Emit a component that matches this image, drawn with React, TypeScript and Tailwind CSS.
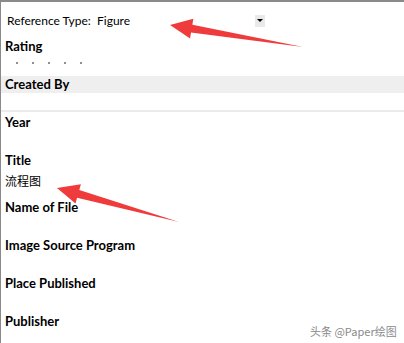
import * as React from "react";

const fields: { label: string; value?: string; tall?: boolean }[] = [
  { label: "Year" },
  { label: "Title", value: "流程图", tall: true },
  { label: "Name of File" },
  { label: "Image Source Program" },
  { label: "Place Published" },
  { label: "Publisher" },
];

function Arrow({ points }: { points: string }) {
  return <polygon points={points} fill="#ef3b3b" />;
}

export default function App() {
  return (
    <div className="relative h-[343px] w-[404px] overflow-hidden border-l border-t-2 border-[#8a8a8a] bg-white font-['Lato',sans-serif] text-[13px] text-black">
      <div className="flex h-[37px] w-[264px] items-center pl-[6px] text-[12px]">
        <span>Reference Type:&nbsp; Figure</span>
        <span className="ml-auto flex h-[12px] w-[10px] items-center justify-center bg-[#e9e9e9]">
          <span className="h-0 w-0 border-x-[3px] border-t-[3px] border-x-transparent border-t-black" />
        </span>
      </div>

      <div className="flex h-[15px] items-center pl-[4px] font-bold">Rating</div>
      <div className="flex h-[22px] gap-[14px] pl-[15px] pt-[8px]">
        {[0, 1, 2, 3, 4].map((i) => (
          <span key={i} className="size-[2px] bg-[#8f8f8f]" />
        ))}
      </div>

      <div className="flex h-[17px] items-center bg-[#efefef] pl-[4px] font-bold">Created By</div>
      <div className="h-[17px]" />
      <div className="h-[2px] bg-[#ebebeb]" />

      <div className="flex flex-col pt-[1px]">
        {fields.map((f) => (
          <div key={f.label} className="flex flex-col">
            <div className="flex h-[19px] items-center pl-[4px] font-bold">{f.label}</div>
            <div className={f.tall ? "h-[28px] pl-[4px] pt-[2px]" : "h-[19px]"}>
              {f.value && (
                <span className="block text-[12px] leading-[18px] font-['Noto_Sans_CJK_SC',sans-serif]">{f.value}</span>
              )}
            </div>
          </div>
        ))}
      </div>

      <span className="absolute left-[309px] top-[321px] font-['Noto_Sans_CJK_SC',sans-serif] text-[11px] text-[#8a8a8a]">
        头条 @Paper绘图
      </span>

      <svg className="pointer-events-none absolute -left-px -top-[2px]" width="404" height="343">
        <Arrow points="170,25 193.3,18.7 192.4,24.7 303,47 191,32.5 190.1,38.5" />
        <Arrow points="57,188 80.9,184.3 79.3,190 179,222 77.1,197.8 75.5,203.5" />
      </svg>
    </div>
  );
}
